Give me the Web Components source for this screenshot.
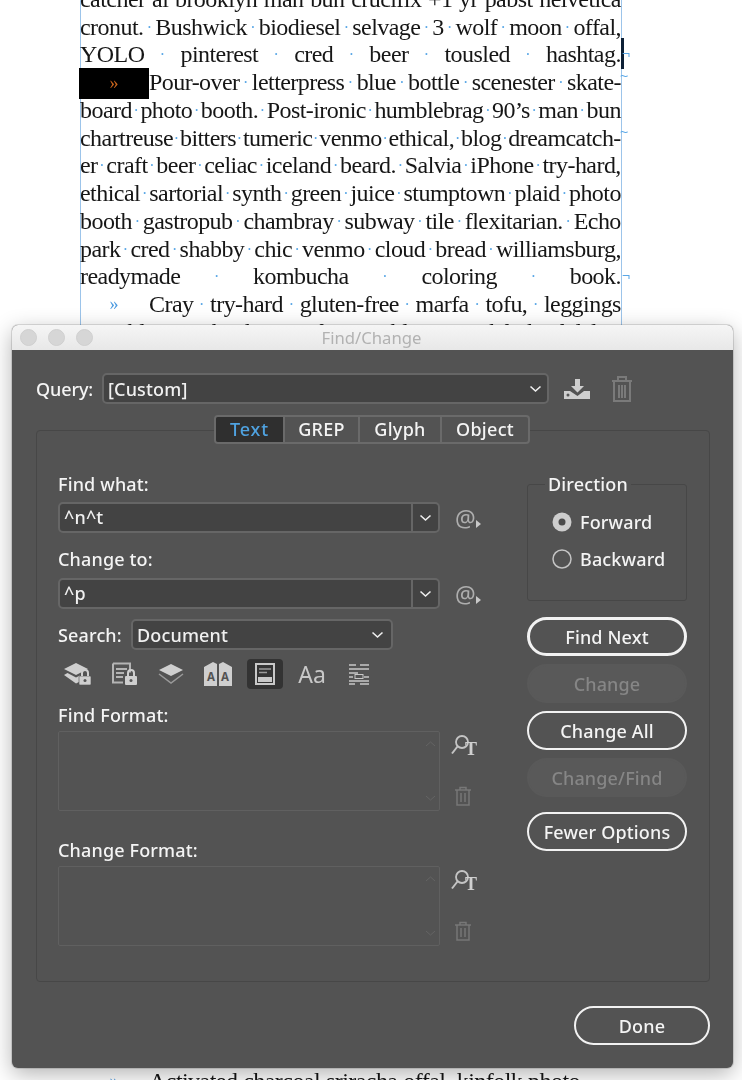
<!DOCTYPE html>
<html lang="en"><head><meta charset="utf-8"><title>Find/Change</title>
<style>
html,body{margin:0;padding:0;background:#fff}
body{width:742px;height:1080px;overflow:hidden;position:relative}
</style></head><body>
<doc-page>
<doc-line text="catcher al brooklyn man bun crucifix +1 yr pabst helvetica"></doc-line>
<doc-line text="cronut. Bushwick biodiesel selvage 3 wolf moon offal,"></doc-line>
<doc-line text="YOLO pinterest cred beer tousled hashtag." mark="para" caret></doc-line>
<doc-line text="Pour-over letterpress blue bottle scenester skate-" tab="selected" mark="hyph"></doc-line>
<doc-line text="board photo booth. Post-ironic humblebrag 90’s man bun"></doc-line>
<doc-line text="chartreuse bitters tumeric venmo ethical, blog dreamcatch-" mark="hyph"></doc-line>
<doc-line text="er craft beer celiac iceland beard. Salvia iPhone try-hard,"></doc-line>
<doc-line text="ethical sartorial synth green juice stumptown plaid photo"></doc-line>
<doc-line text="booth gastropub chambray subway tile flexitarian. Echo"></doc-line>
<doc-line text="park cred shabby chic venmo cloud bread williamsburg,"></doc-line>
<doc-line text="readymade kombucha coloring book." mark="para"></doc-line>
<doc-line text="Cray try-hard gluten-free marfa tofu, leggings" tab="plain"></doc-line>
<doc-line text="mumblecore banh mi forage blog. Pitchfork fidelity"></doc-line>
<doc-gap></doc-gap>
<doc-line text="Activated charcoal sriracha offal, kinfolk photo" tab="plain" last></doc-line>
</doc-page>
<find-dialog></find-dialog>

<template id="t-dialog">
<style>
:host{display:block;position:absolute;left:12px;top:325px;width:721px;height:743px;border-radius:6px;background:#535353;
 box-shadow:0 0 0 1px rgba(0,0,0,.12),0 6px 22px rgba(0,0,0,.3);color:#f4f4f4;font:500 18px/24px "Noto Sans",sans-serif;letter-spacing:.15px;overflow:hidden;filter:blur(.3px)}
*{box-sizing:border-box}
.title{height:25px;background:linear-gradient(#f5f5f5,#e8e8e8);display:grid;grid-template-columns:1fr auto 1fr;align-items:center;padding:0 10px 0 8px;color:#b2b2b2;font-size:16.7px;font-weight:400;letter-spacing:0}
.lights{display:flex;gap:11px}
.lights i{width:17px;height:17px;border-radius:50%;background:#d6d6d6;border:1px solid #cfcfcf}
.body{padding:23px 23px 0 24px}
.query{display:flex;align-items:center;height:31px}
.query .lab{width:66px;letter-spacing:-.1px}
.query dlg-select{width:447px;height:31px;--pr:5px}
.query svg{display:block}
.panel{margin-top:26px;height:552px;border:1px solid #474747;border-radius:4px;padding:0 22px 0 21px}
tab-bar{margin:-16px 0 0 156px}
.cols{display:grid;grid-template-columns:469px 160px;margin-top:28px}
.left{display:flex;flex-direction:column}
.row{display:flex;align-items:center}
.lab2{height:24px}
.right{display:flex;flex-direction:column}
fieldset{margin:0;padding:12px 0 0 24px;height:129px;border:1px solid #474747;border-radius:3px;min-width:0}
legend{margin-left:-7px;padding:0 3px;height:24px}
.radios{display:flex;flex-direction:column;gap:9px}
.btns{display:flex;flex-direction:column;gap:9px;margin-top:16px}
.icons{display:grid;grid-template-columns:repeat(7,36px);column-gap:11px;margin:9px 0 0 1px;height:30px}
.icons>div{display:flex;align-items:center;justify-content:center;border-radius:4px;color:#c8c8c8}
.icons>.on{background:#333}
.aa{font-size:23px;line-height:30px;color:#c4c4c4;letter-spacing:0;font-weight:400}
.foot{display:flex;justify-content:flex-end;padding-top:24px}
.foot dlg-button{width:136px}
</style>
<div class="title"><div class="lights"><i></i><i></i><i></i></div><div>Find/Change</div><div></div></div>
<div class="body">
 <div class="query"><span class="lab">Query:</span><dlg-select>[Custom]</dlg-select>
  <svg style="margin-left:14px" width="28" height="26" viewBox="0 0 28 26"><path d="M12 3h5v7h4l-6.500 6.500L8 10h4z" fill="#cfcfcf"/><path d="M1 15h6l7.500 5L21 15h6v8H1z" fill="#cfcfcf"/><circle cx="5" cy="19" r="1.500" fill="#555"/></svg>
  <svg style="margin-left:19px" width="24" height="28" viewBox="0 0 24 28" fill="none" stroke="#7a7a7a" stroke-width="2"><path d="M2 6h20M8 5V2h8v3M4 6v20h16V6M9 10v13M12 10v13M15 10v13"/></svg>
 </div>
 <div class="panel">
  <tab-bar></tab-bar>
  <div class="cols">
   <div class="left">
    <div class="lab2">Find what:</div>
    <combo-field style="margin-top:6px">^n^t</combo-field>
    <div class="lab2" style="margin-top:14px">Change to:</div>
    <combo-field style="margin-top:7px">^p</combo-field>
    <div class="row" style="margin-top:10px;height:31px"><span style="width:73px">Search:</span><dlg-select style="width:262px;height:31px;--pr:7px">Document</dlg-select></div>
    <div class="icons">
     <div><svg width="30" height="26" viewBox="0 0 30 26"><path d="M2 8 14 2l12 6-12 6z" fill="#cfcfcf"/><path d="M2 14l3.500-2L14 16.500 18 14.500v6l-4 2z" fill="#cfcfcf"/><rect x="17" y="15" width="12" height="9" rx="1" fill="#cfcfcf" stroke="#535353" stroke-width=".6"/><path d="M20 15v-3a3 3 0 0 1 6 0v3" fill="none" stroke="#cfcfcf" stroke-width="2"/><circle cx="23" cy="19.500" r="1.500" fill="#555"/></svg></div>
     <div><svg width="27" height="26" viewBox="0 0 27 26" fill="none"><path d="M2 2.500h17v9M2 2.500v19h10" stroke="#b4b4b4" stroke-width="2"/><path d="M5 8h11M5 12h8M5 16h7" stroke="#b4b4b4" stroke-width="2"/><rect x="14" y="15" width="12" height="9" rx="1" fill="#cfcfcf"/><path d="M17 15v-3a3 3 0 0 1 6 0v3" stroke="#cfcfcf" stroke-width="2"/><circle cx="20" cy="19.500" r="1.500" fill="#555"/></svg></div>
     <div><svg width="26" height="22" viewBox="0 0 26 22"><path d="M1 11l12 9 12-9" fill="none" stroke="#9a9a9a" stroke-width="1.500"/><path d="M1 7l12-6 12 6-12 6z" fill="#cfcfcf"/></svg></div>
     <div style="position:relative"><book-icon></book-icon></div>
     <div class="on"><svg width="20" height="22" viewBox="0 0 20 22" fill="none" stroke="#c8c8c8"><rect x="1" y="1" width="18" height="20" stroke-width="2"/><path d="M4 6h12M4 9.500h8" stroke-width="1.500" stroke="#9a9a9a"/><rect x="3" y="14" width="14" height="5" fill="#c8c8c8" stroke="none"/></svg></div>
     <div class="aa">Aa</div>
     <div><svg width="22" height="22" viewBox="0 0 22 22" fill="none" stroke="#c8c8c8" stroke-width="1.500"><path d="M1 2h7M12 2h9M1 6h20M1 10h9M1 14h4M16 14h5M1 18h20M1 21h6M12 21h9"/><rect x="7" y="11.500" width="8" height="4" stroke-width="1"/></svg></div>
    </div>
    <div class="lab2" style="margin-top:14px">Find Format:</div>
    <format-field style="margin-top:4px"></format-field>
    <div class="lab2" style="margin-top:27px">Change Format:</div>
    <format-field style="margin-top:4px"></format-field>
   </div>
   <div class="right">
    <fieldset><legend>Direction</legend>
     <div class="radios"><radio-opt checked>Forward</radio-opt><radio-opt>Backward</radio-opt></div>
    </fieldset>
    <div class="btns">
     <dlg-button primary>Find Next</dlg-button>
     <dlg-button disabled>Change</dlg-button>
     <dlg-button>Change All</dlg-button>
     <dlg-button disabled>Change/Find</dlg-button>
     <dlg-button style="margin-top:7px">Fewer Options</dlg-button>
    </div>
   </div>
  </div>
 </div>
 <div class="foot"><dlg-button>Done</dlg-button></div>
</div>
</template>

<script>
function addHTML(root, html){const t=document.createElement('template');t.innerHTML=html;root.appendChild(t.content);}
function def(name, css, html, init){
  customElements.define(name, class extends HTMLElement{
    constructor(){super();const r=this.attachShadow({mode:'open'});r.innerHTML='<style>'+css+'</style>'+html;}
    connectedCallback(){ if(init) init(this,this.shadowRoot); }
  });
}
const esc=s=>s.replace(/&/g,'&amp;');
def('doc-page',`:host{display:block;width:542px;height:1080px;margin-left:80px;border-left:1px solid #9cc4ea;border-right:1px solid #9cc4ea;box-sizing:border-box;color:#161616;filter:blur(.3px)}
 .in{padding-top:0;margin-top:-14px}`,`<div class="in"><slot></slot></div>`);
def('doc-gap',`:host{display:block;height:721px}`,``);
def('doc-line',`:host{display:flex;height:27.74px;font:24px/27.74px "Liberation Serif",serif;letter-spacing:-.55px;white-space:nowrap;position:relative;width:541px;margin-left:-1px}
 .words{flex:1;display:flex;justify-content:space-between;min-width:0}
 :host([last]) .words{flex:0 0 431px}
 :host([last]) .d{visibility:hidden;font-size:4px}
 .d{color:#5aa7e6;font-size:16px;letter-spacing:0}
 .tab{width:70px;flex:none;text-align:center;font-size:18px;letter-spacing:0;color:#4d9be0;display:block;margin-left:-1px}
 .tab.selected{background:#000;color:#c9641c;height:31px;line-height:31px;margin-top:-1px}
 .mk{position:absolute;left:100%;top:0;margin-left:1px;color:#5aa7e6;font:14px/27px "Liberation Sans",sans-serif;letter-spacing:0}
 .caret{position:absolute;left:541px;top:-3px;width:3px;height:31px;background:#0d2036}`,
 ``,(h,r)=>{
   if(r.querySelector('.words'))return;
   const t=h.getAttribute('tab'),m=h.getAttribute('mark');
   let s='';
   if(t)s+=`<span class="tab ${t}">»</span>`;
   const w=h.getAttribute('text').split(' ');
   s+='<span class="words">'+w.map(x=>`<span>${esc(x)}</span>`).join('<span class="d">·</span>')+'</span>';
   if(h.hasAttribute('caret'))s+='<i class="caret"></i>';
   if(m==='para')s+='<span class="mk">¬</span>';
   if(m==='hyph')s+='<span class="mk" style="top:-6px;margin-left:-1px">~</span>';
   addHTML(r,s);
 });
def('find-dialog','','',(h,r)=>{ if(!r.querySelector('.title')) r.appendChild(document.getElementById('t-dialog').content.cloneNode(true)); });
const chev=`<svg width="13" height="8" viewBox="0 0 13 8" fill="none" stroke="#eee" stroke-width="1.600"><path d="M1.500 1.500l5 4.500 5-4.500"/></svg>`;
def('dlg-select',`:host{display:flex;align-items:center;box-sizing:border-box;background:#434343;border:2px solid #666;border-radius:5px;padding:0 var(--pr,7px) 0 4px;color:#f0f0f0}
 .t{flex:1}svg{display:block}`,`<span class="t"><slot></slot></span>`+chev);
def('combo-field',`:host{display:flex;align-items:center}
 *{box-sizing:border-box}
 .b{width:382px;height:31px;display:flex;background:#434343;border:2px solid #666;border-radius:5px;color:#f0f0f0}
 .t{flex:1;padding:0 4px;line-height:27px}
 .c{width:27px;border-left:2px solid #666;display:flex;align-items:center;justify-content:center}
 .at{margin-left:15px;font-size:23px;font-weight:400;color:#aeaeae;position:relative;line-height:28px;letter-spacing:0}
 svg{display:block}
 .tri{position:absolute;left:21px;top:16px}`,
 `<div class="b"><span class="t"><slot></slot></span><span class="c">${chev}</span></div><span class="at">@<svg class="tri" width="6" height="8" viewBox="0 0 6 8"><path d="M0 0l5 4-5 4z" fill="#c8c8c8"/></svg></span>`);
def('tab-bar',`:host{display:block;width:316px;height:29px;box-sizing:border-box;border:2px solid #6a6a6a;border-radius:4px;background:#535353;overflow:hidden}
 .w{display:grid;grid-template-columns:67px 75px 82px 1fr;height:100%;text-align:center;line-height:25px;font-size:18px;letter-spacing:.3px}
 span+span{border-left:2px solid #6a6a6a}
 .on{background:#2f2f2f;color:#4fa2e0;letter-spacing:.9px}`,`<div class="w"><span class="on">Text</span><span>GREP</span><span>Glyph</span><span>Object</span></div>`);
def('radio-opt',`:host{display:flex;align-items:center;height:28px;gap:8px}
 svg{display:block}`,``,(h,r)=>{ if(r.querySelector('svg'))return; const c=h.hasAttribute('checked');
  addHTML(r,(c?`<svg width="20" height="20" viewBox="0 0 20 20"><circle cx="10" cy="10" r="9.500" fill="#cdcdcd"/><circle cx="10" cy="10" r="3.500" fill="#4a4a4a"/></svg>`:`<svg width="20" height="20" viewBox="0 0 20 20"><circle cx="10" cy="10" r="9" fill="none" stroke="#c4c4c4" stroke-width="1.500"/></svg>`)+'<slot></slot>');});
def('dlg-button',`:host{display:flex;align-items:center;justify-content:center;height:39px;box-sizing:border-box;border-radius:20px;border:2px solid #f2f2f2;color:#f4f4f4;margin-bottom:-1px}
 :host([primary]){border-width:3px}
 :host([disabled]){border-color:#595959;background:#595959;color:#868686}`,`<slot></slot>`);
def('format-field',`:host{display:flex;box-sizing:border-box}
 *{box-sizing:border-box}
 .b{width:382px;height:80px;border:1px solid #606060;border-radius:2px;position:relative}
 .b svg{position:absolute;right:3px}
 .ic{margin-left:9px;display:flex;flex-direction:column;justify-content:space-between;height:80px;padding:2px 0 5px 0;width:28px;align-items:center}`,
 `<div class="b"><svg style="top:9px" width="11" height="6" viewBox="0 0 11 6" fill="none" stroke="#646464"><path d="M1 5l4.500-4L10 5"/></svg><svg style="bottom:9px" width="11" height="6" viewBox="0 0 11 6" fill="none" stroke="#646464"><path d="M1 1l4.500 4L10 1"/></svg></div>
 <div class="ic"><svg width="28" height="24" viewBox="0 0 28 24" fill="none"><circle cx="13" cy="9" r="6" stroke="#c4c4c4" stroke-width="1.800"/><path d="M8.500 13.500l-5.500 7" stroke="#c4c4c4" stroke-width="2"/><text x="16" y="22" font-family="Liberation Serif" font-weight="700" font-size="18" fill="#cfcfcf" stroke="none">T</text></svg>
 <svg width="18" height="20" viewBox="0 0 18 20" fill="none" stroke="#777" stroke-width="1.500"><path d="M1 4h16M6 4V1.500h6V4M3 4v15h12V4M7 7v9M11 7v9"/></svg></div>`);
def('book-icon',`:host{display:block;line-height:0}
 .w{position:relative;width:28px;height:24px;background:linear-gradient(90deg,#cfcfcf 0 13px,#535353 13px 15px,#cfcfcf 15px);clip-path:polygon(0 5px,9px 0,13px 2px,13px 0,15px 0,15px 2px,19px 0,28px 5px,28px 24px,0 24px)}
 .a{position:absolute;top:8px;font:700 11.500px/14px "Noto Sans",sans-serif;color:#535353;letter-spacing:0}`,`<div class="w"><span class="a" style="left:3px">A</span><span class="a" style="left:17px">A</span></div>`);
</script>
</body></html>
